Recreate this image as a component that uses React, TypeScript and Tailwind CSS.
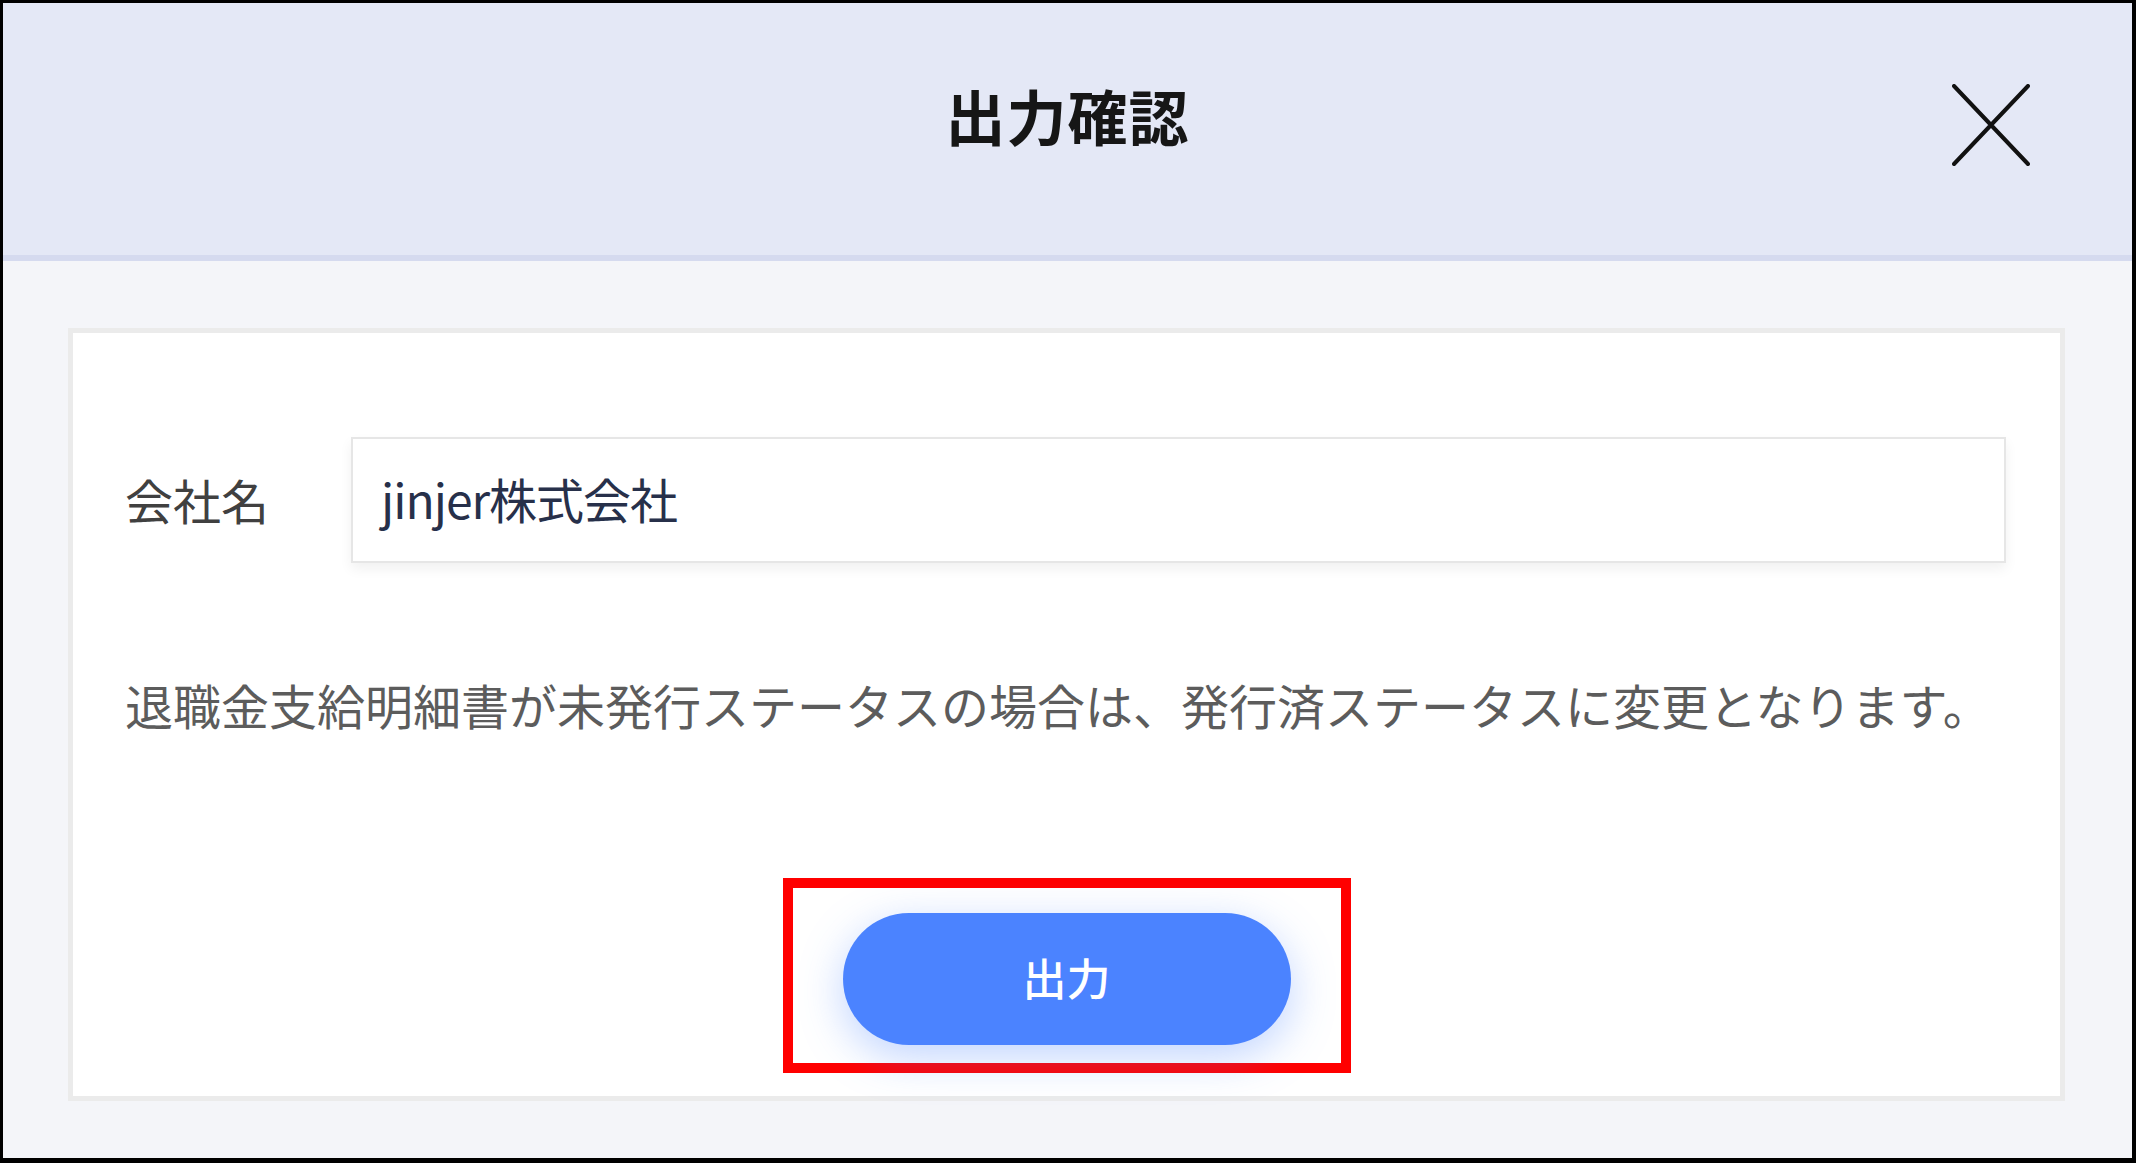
import React from "react";

export default function App() {
  return (
    <div className="w-[2136px] h-[1163px] box-border border-black border-t-[3px] border-l-[3px] border-r-[4px] border-b-[5px] flex flex-col font-['Noto_Sans_CJK_JP','Noto_Sans',sans-serif] overflow-hidden">
      {/* Header */}
      <div className="h-[258px] shrink-0 bg-[#e4e8f6] border-b-[6px] border-[#d5daef] grid grid-cols-[1fr_auto_1fr] items-start">
        <div />
        <h1 className="mt-[82px] text-[60px] leading-none font-bold text-[#161616] tracking-[1px]">出力確認</h1>
        <div className="flex justify-end">
          <button className="mt-[81px] mr-[102px] w-[78px] h-[82px] flex items-center justify-center" aria-label="閉じる">
            <svg width="78" height="82" viewBox="0 0 78 82" fill="none">
              <path d="M2 2 L76 80 M76 2 L2 80" stroke="#111" strokeWidth="4" strokeLinecap="round" />
            </svg>
          </button>
        </div>
      </div>

      {/* Body */}
      <div className="flex-1 bg-[#f4f5f9] pt-[67px] pl-[65px] pr-[67px] pb-[57px]">
        <div className="bg-white border-[5px] border-[#ebebeb] pt-[104px] pb-[23px]">
          <div className="flex items-center pl-[52px] pr-[54px]">
            <div className="w-[226px] shrink-0 text-[48px] leading-none text-[#404040] -mt-[3px]">会社名</div>
            <div className="flex-1 h-[126px] border-2 border-[#e6e6e6] bg-white shadow-[0_6px_12px_rgba(0,0,0,0.06)] flex items-center pl-[28px]">
              <span className="text-[48px] leading-none text-[#27304a] tracking-[-1px] -mt-[4px]">jinjer株式会社</span>
            </div>
          </div>

          <p className="mt-[105px] pl-[52px] pr-[40px] text-[48px] leading-[72px] text-[#5c5c5c] whitespace-nowrap">
            退職金支給明細書が未発行ステータスの場合は、発行済ステータスに変更となります。
          </p>

          <div className="mt-[138px] mx-auto w-[568px] h-[195px] border-[10px] border-[#ff0000] pt-[25px] flex justify-center">
            <button className="w-[448px] h-[132px] rounded-full bg-[#4b83ff] text-white text-[44px] font-medium leading-none shadow-[0_12px_44px_rgba(75,131,255,0.35)] flex items-center justify-center pb-[4px]">
              出力
            </button>
          </div>
        </div>
      </div>
    </div>
  );
}
